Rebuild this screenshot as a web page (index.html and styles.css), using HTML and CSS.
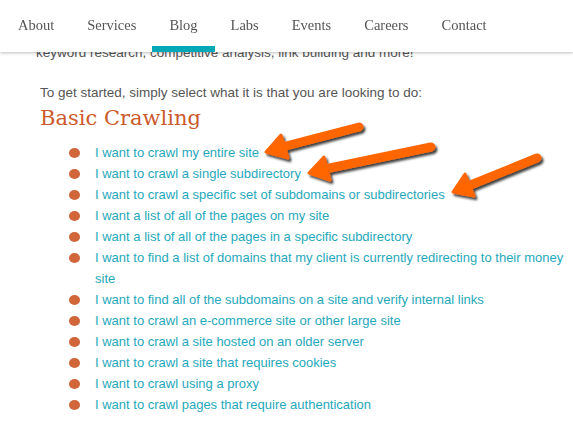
FILE: index.html
```html
<!DOCTYPE html>
<html lang="en">
<head>
  <meta charset="UTF-8">
  <meta name="viewport" content="width=device-width, initial-scale=1.0">
  <title>Basic Crawling</title>
  <link rel="stylesheet" href="styles.css">
</head>
<body>
  <header class="site-nav">
    <nav>
      <a href="#">About</a>
      <a href="#">Services</a>
      <a href="#" class="active">Blog</a>
      <a href="#">Labs</a>
      <a href="#">Events</a>
      <a href="#">Careers</a>
      <a href="#">Contact</a>
    </nav>
  </header>

  <main class="content">
    <p class="intro">keyword research, competitive analysis, link building and more!</p>
    <p>To get started, simply select what it is that you are looking to do:</p>
    <h2>Basic Crawling</h2>

    <ul class="tasks">
      <li><a href="#">I want to crawl my entire site</a></li>
      <li><a href="#">I want to crawl a single subdirectory</a></li>
      <li><a href="#">I want to crawl a specific set of subdomains or subdirectories</a></li>
      <li><a href="#">I want a list of all of the pages on my site</a></li>
      <li><a href="#">I want a list of all of the pages in a specific subdirectory</a></li>
      <li><a href="#">I want to find a list of domains that my client is currently redirecting to their money site</a></li>
      <li><a href="#">I want to find all of the subdomains on a site and verify internal links</a></li>
      <li><a href="#">I want to crawl an e-commerce site or other large site</a></li>
      <li><a href="#">I want to crawl a site hosted on an older server</a></li>
      <li><a href="#">I want to crawl a site that requires cookies</a></li>
      <li><a href="#">I want to crawl using a proxy</a></li>
      <li><a href="#">I want to crawl pages that require authentication</a></li>
    </ul>

    <!-- annotation arrows drawn over the screenshot -->
    <svg class="arrows" width="573" height="429" viewBox="0 0 573 429">
      <defs>
        <filter id="shade" x="-20%" y="-50%" width="140%" height="200%">
          <feDropShadow dx="2" dy="2.5" stdDeviation="1.3" flood-color="#000" flood-opacity="0.75"/>
        </filter>
      </defs>
      <g filter="url(#shade)" fill="#ff6600" stroke="#ff6600" stroke-linejoin="round" stroke-linecap="round">
        <line x1="282" y1="147" x2="359" y2="127" stroke-width="9"/>
        <path d="M266 152 L281 135 L288 158 Z" stroke-width="3"/>

        <line x1="325" y1="169" x2="431" y2="147" stroke-width="9"/>
        <path d="M309 173 L324 157 L330 180 Z" stroke-width="3"/>

        <line x1="468" y1="186" x2="537" y2="158" stroke-width="9"/>
        <path d="M453 192 L465 174 L474 196 Z" stroke-width="3"/>
      </g>
    </svg>
  </main>
</body>
</html>
```
FILE: styles.css
```css
body {
  margin: 0;
  font-family: "Liberation Sans", Arial, sans-serif;
  font-size: 13.5px;
  color: #555;
  background: #fff;
}

.site-nav {
  position: fixed;
  top: 0;
  left: 0;
  right: 0;
  height: 52px;
  background: #fff;
  box-shadow: 0 1px 3px rgba(0, 0, 0, 0.25);
  z-index: 2;
}

.site-nav nav {
  display: flex;
  padding-left: 18px;
  gap: 33px;
}

.site-nav a {
  display: block;
  height: 46px;
  line-height: 50px;
  font-family: "Liberation Serif", serif;
  font-size: 14.5px;
  color: #555;
  text-decoration: none;
  border-bottom: 6px solid transparent;
}

.site-nav a.active {
  border-bottom-color: #00a9b5;
  margin: 0 -17px;
  padding: 0 17px;
}

.content {
  position: relative;
  padding: 42px 8px 0 40px;
  line-height: 21px;
}

.content p {
  margin: 0 0 19px;
}

.content .intro {
  margin-left: -4px;
}

.content h2 {
  margin: -19px 0 0;
  font-family: "DejaVu Serif", serif;
  font-weight: normal;
  font-size: 21px;
  line-height: 30px;
  color: #cc5a2c;
}

.tasks {
  list-style: none;
  margin: 9px 0 0;
  padding: 0 0 0 55px;
  font-size: 13px;
}

.tasks li {
  position: relative;
}

.tasks li::before {
  content: "";
  position: absolute;
  left: -26px;
  top: 6px;
  width: 11px;
  height: 10px;
  border-radius: 50%;
  background: #d0663a;
}

.tasks a {
  color: #1fa8bc;
  text-decoration: none;
}

.arrows {
  position: absolute;
  top: 0;
  left: 0;
  pointer-events: none;
}
```
